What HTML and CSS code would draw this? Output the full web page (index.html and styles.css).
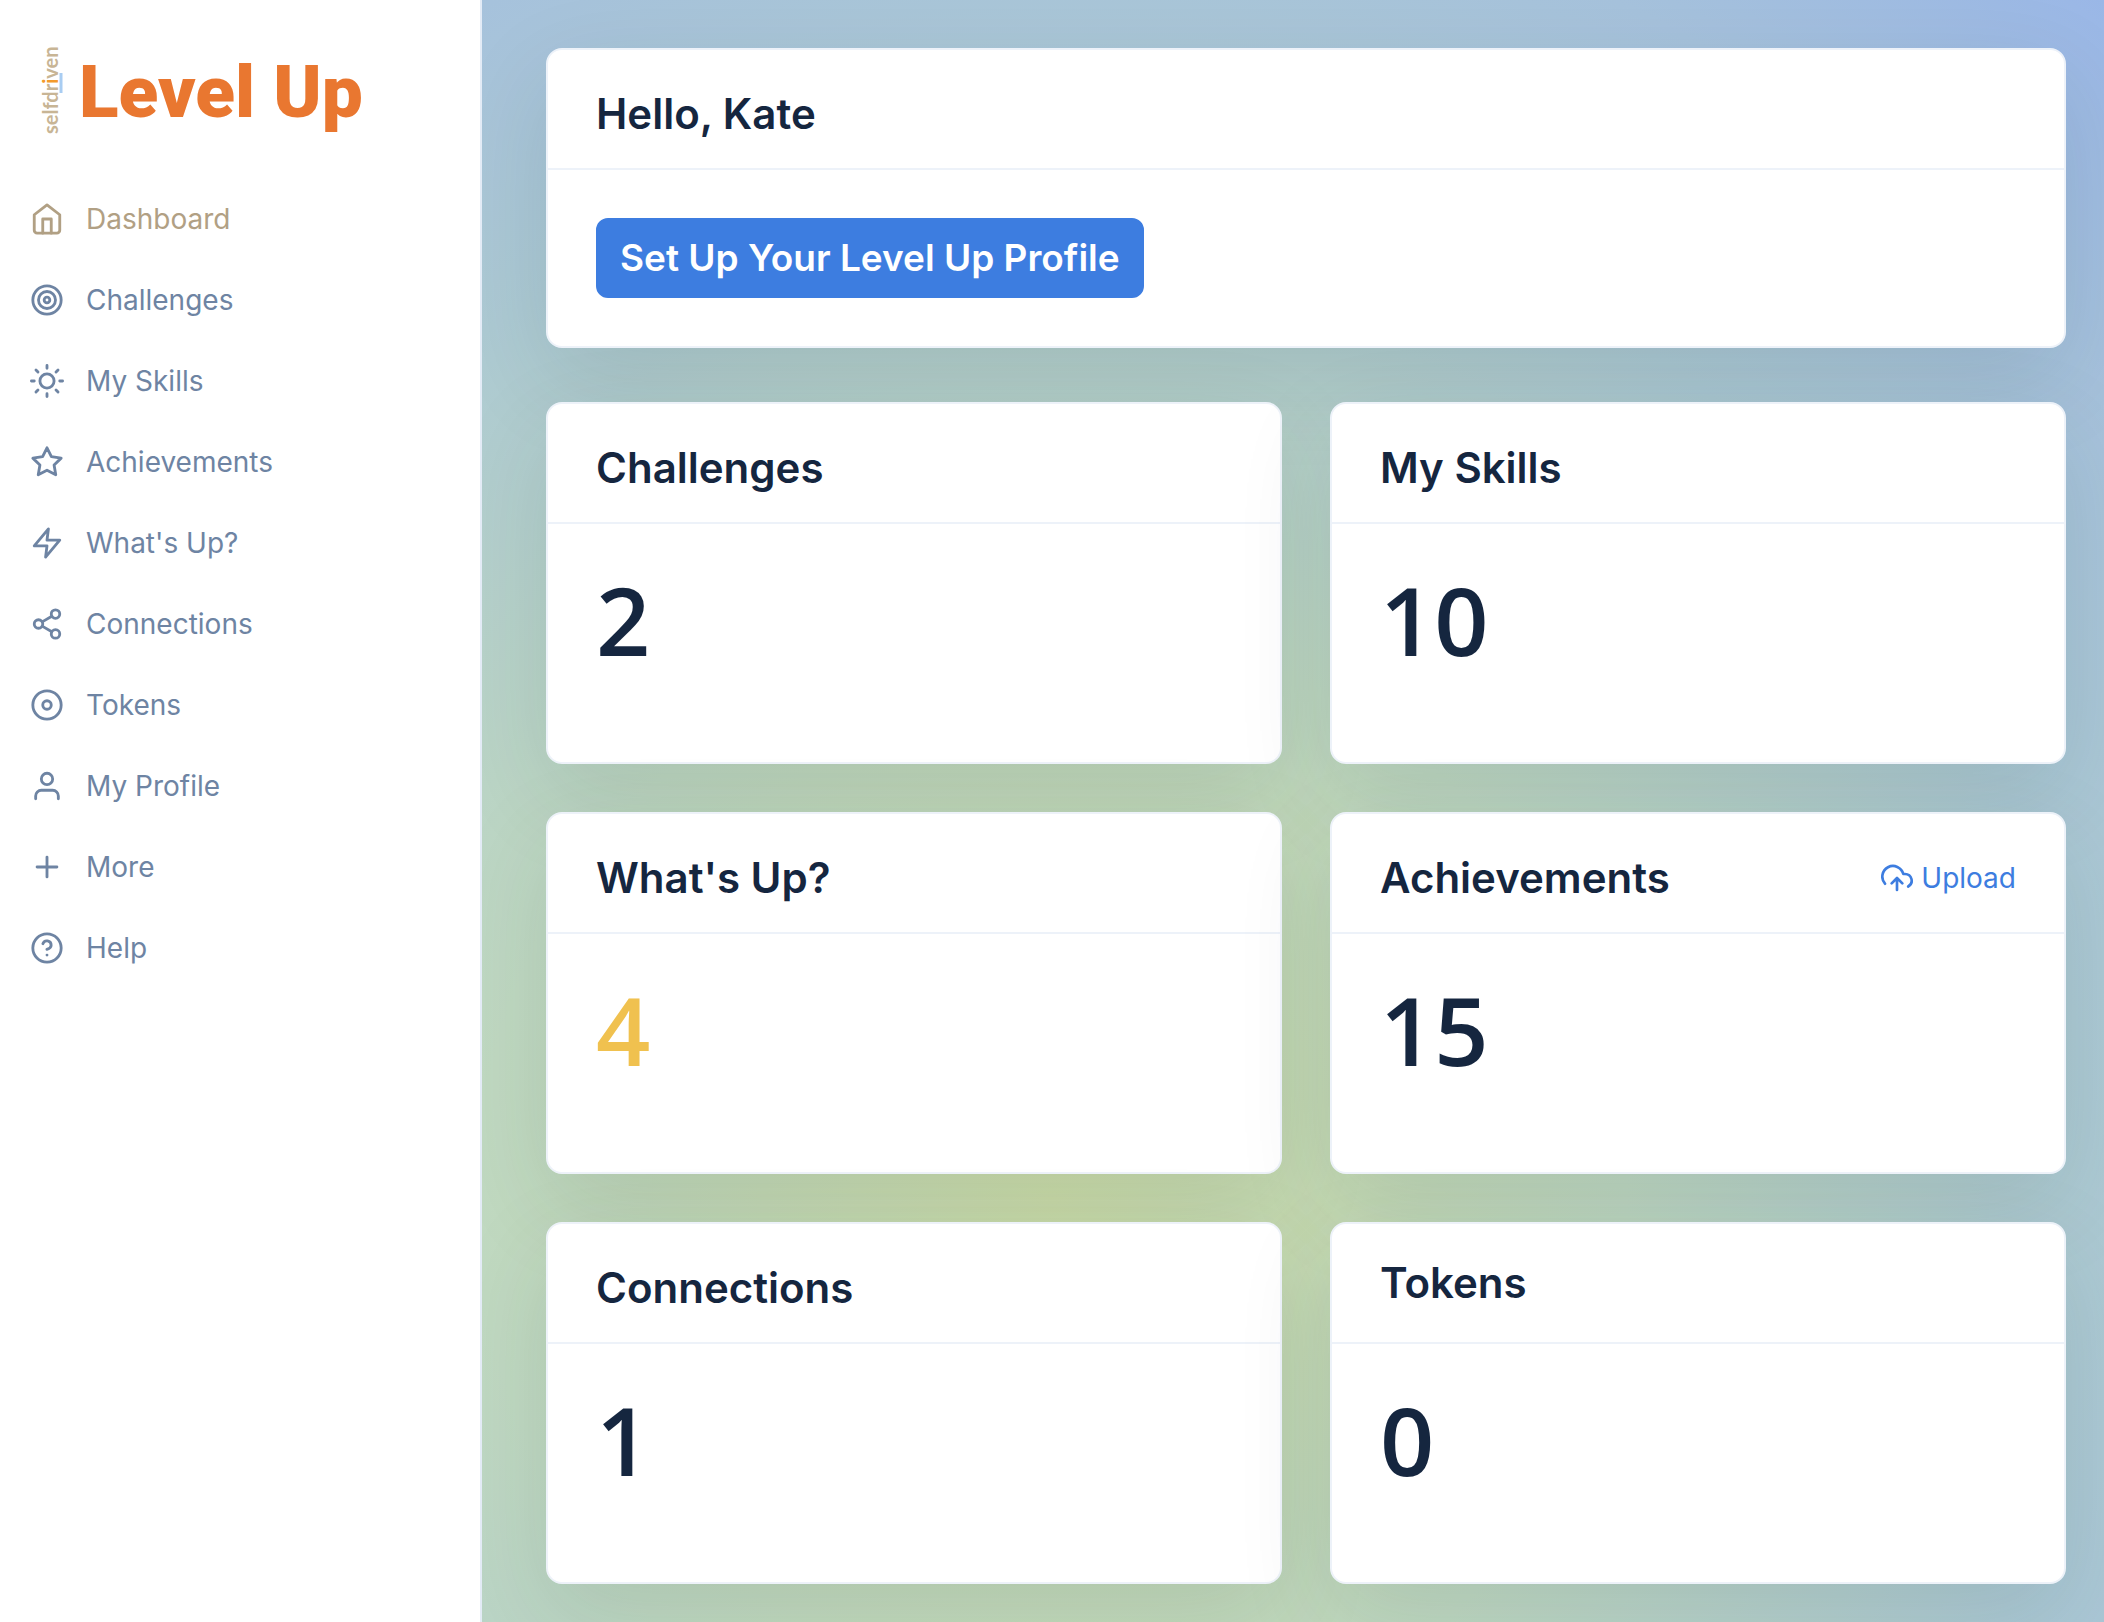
FILE: index.html
```html
<!DOCTYPE html>
<html lang="en">
<head>
<meta charset="utf-8">
<meta name="viewport" content="width=device-width, initial-scale=1">
<title>Level Up</title>
<link rel="stylesheet" href="styles.css">
</head>
<body>
<div class="app">
  <aside class="sidebar">
    <a class="brand" href="#">
      <svg class="logo" viewBox="0 0 340 88">
        <path class="logo-bar" d="M25 27v20"/>
        <text class="logo-mark" transform="translate(22 88) rotate(-90)">selfdr<tspan class="logo-i">i</tspan>ven</text>
        <text class="logo-name" x="43" y="71">Level Up</text>
      </svg>
    </a>
    <nav class="nav">
      <a class="nav-link active" href="#"><svg class="icon" viewBox="0 0 24 24"><path d="M3 9l9-7 9 7v11a2 2 0 0 1-2 2H5a2 2 0 0 1-2-2z"/><path d="M9 22V12h6v10"/></svg>Dashboard</a>
      <a class="nav-link" href="#"><svg class="icon" viewBox="0 0 24 24"><circle cx="12" cy="12" r="10"/><circle cx="12" cy="12" r="6"/><circle cx="12" cy="12" r="2"/></svg>Challenges</a>
      <a class="nav-link" href="#"><svg class="icon" viewBox="0 0 24 24"><circle cx="12" cy="12" r="5"/><path d="M12 1v2M12 21v2M4.22 4.22l1.42 1.42M18.36 18.36l1.42 1.42M1 12h2M21 12h2M4.22 19.78l1.42-1.42M18.36 5.64l1.42-1.42"/></svg>My Skills</a>
      <a class="nav-link" href="#"><svg class="icon" viewBox="0 0 24 24"><path d="M12 2l3.09 6.26L22 9.27l-5 4.87 1.18 6.88L12 17.77l-6.18 3.25L7 14.14 2 9.27l6.91-1.01z"/></svg>Achievements</a>
      <a class="nav-link" href="#"><svg class="icon" viewBox="0 0 24 24"><path d="M13 2L3 14h9l-1 8 10-12h-9z"/></svg>What's Up?</a>
      <a class="nav-link" href="#"><svg class="icon" viewBox="0 0 24 24"><circle cx="18" cy="5" r="3"/><circle cx="6" cy="12" r="3"/><circle cx="18" cy="19" r="3"/><path d="M8.59 13.51l6.83 3.98M15.41 6.51l-6.82 3.98"/></svg>Connections</a>
      <a class="nav-link" href="#"><svg class="icon" viewBox="0 0 24 24"><circle cx="12" cy="12" r="10"/><circle cx="12" cy="12" r="3"/></svg>Tokens</a>
      <a class="nav-link" href="#"><svg class="icon" viewBox="0 0 24 24"><path d="M20 21v-2a4 4 0 0 0-4-4H8a4 4 0 0 0-4 4v2"/><circle cx="12" cy="7" r="4"/></svg>My Profile</a>
      <a class="nav-link" href="#"><svg class="icon" viewBox="0 0 24 24"><path d="M12 5v14M5 12h14"/></svg>More</a>
      <a class="nav-link" href="#"><svg class="icon" viewBox="0 0 24 24"><circle cx="12" cy="12" r="10"/><path d="M9.09 9a3 3 0 0 1 5.83 1c0 2-3 3-3 3M12 17h.01"/></svg>Help</a>
    </nav>
  </aside>
  <main class="main">
    <section class="card welcome">
      <header class="card-header"><h1 class="card-title">Hello, Kate</h1></header>
      <div class="card-body"><button class="btn" type="button">Set Up Your Level Up Profile</button></div>
    </section>
    <div class="grid">
      <section class="card">
        <header class="card-header"><h2 class="card-title">Challenges</h2></header>
        <div class="card-body"><p class="count">2</p></div>
      </section>
      <section class="card">
        <header class="card-header"><h2 class="card-title">My Skills</h2></header>
        <div class="card-body"><p class="count">10</p></div>
      </section>
      <section class="card">
        <header class="card-header"><h2 class="card-title">What's Up?</h2></header>
        <div class="card-body"><p class="count warning">4</p></div>
      </section>
      <section class="card">
        <header class="card-header">
          <h2 class="card-title">Achievements</h2>
          <a class="upload" href="#"><svg class="icon upload-icon" viewBox="0 0 24 24"><path d="M16 16l-4-4-4 4M12 12v9M20.39 18.39A5 5 0 0 0 18 9h-1.26A8 8 0 1 0 3 16.3"/></svg>Upload</a>
        </header>
        <div class="card-body"><p class="count">15</p></div>
      </section>
      <section class="card">
        <header class="card-header"><h2 class="card-title">Connections</h2></header>
        <div class="card-body"><p class="count">1</p></div>
      </section>
      <section class="card">
        <header class="card-header compact"><h2 class="card-title">Tokens</h2></header>
        <div class="card-body"><p class="count">0</p></div>
      </section>
    </div>
  </main>
</div>
</body>
</html>
```
FILE: styles.css
```css
* {
  box-sizing: border-box;
}

body {
  margin: 0;
  font-family: Inter, "Liberation Sans", sans-serif;
  font-size: 28px;
  color: #15263f;
  background: radial-gradient(circle 1596px at 50% 1200px, #cedfa9 0%, #c0d9c1 36%, #adcad3 65%, #a6c2dc 83%, #9ab7e7 100%);
}

.app {
  display: flex;
  min-height: 100vh;
}

.sidebar {
  position: relative;
  z-index: 1;
  flex: 0 0 482px;
  background: #fff;
  border-right: 2px solid #e3ebf6;
}

.brand {
  display: block;
  height: 88px;
  margin: 46px 0 44px 36px;
}

.logo {
  display: block;
  width: 340px;
  height: 88px;
  overflow: visible;
}

.logo-bar {
  stroke: #a9cdf2;
  stroke-width: 3;
}

.logo-mark {
  font-family: Lato, sans-serif;
  font-size: 20px;
  font-weight: 700;
  fill: #c8b595;
}

.logo-i {
  fill: #f39a2b;
}

.logo-name {
  font-family: Roboto, sans-serif;
  font-size: 73px;
  font-weight: 900;
  fill: #e97730;
}

.nav {
  display: flex;
  flex-direction: column;
}

.nav-link {
  display: flex;
  align-items: center;
  gap: 22px;
  height: 81px;
  padding-left: 30px;
  color: #6e84a3;
  text-decoration: none;
}

.nav-link.active {
  color: #b1a084;
}

.icon {
  width: 34px;
  height: 34px;
  fill: none;
  stroke: currentColor;
  stroke-width: 2;
  stroke-linecap: round;
  stroke-linejoin: round;
}

.main {
  flex: 1;
  padding: 48px 38px 38px 64px;
}

.card {
  background: #fff;
  border: 2px solid #edf2f9;
  border-radius: 16px;
  box-shadow: 0 32px 96px rgba(18, 38, 63, 0.12);
}

.welcome {
  margin-bottom: 54px;
}

.grid {
  display: grid;
  grid-template-columns: 1fr 1fr;
  gap: 48px;
}

.card-header {
  display: flex;
  align-items: center;
  justify-content: space-between;
  height: 120px;
  padding: 10px 48px 0;
  border-bottom: 2px solid #edf2f9;
}

.card-header.compact {
  padding-top: 0;
}

.card-title {
  margin: 0;
  font-size: 42px;
  font-weight: 600;
  line-height: 48px;
}

.card-body {
  padding: 48px;
}

.btn {
  display: block;
  height: 80px;
  padding: 0 22px;
  border: 2px solid #3d7de0;
  border-radius: 12px;
  background: #3d7de0;
  color: #fff;
  font: 600 37px/48px Inter, "Liberation Sans", sans-serif;
}

.count {
  margin: 0 0 48px;
  font-family: "Open Sans", "Noto Sans", sans-serif;
  font-size: 95px;
  font-weight: 600;
  line-height: 94px;
}

.warning {
  color: #f0c14f;
}

.upload {
  display: flex;
  align-items: center;
  gap: 8px;
  color: #3d7de0;
  text-decoration: none;
}

.upload-icon {
  width: 32px;
  height: 32px;
}
```
